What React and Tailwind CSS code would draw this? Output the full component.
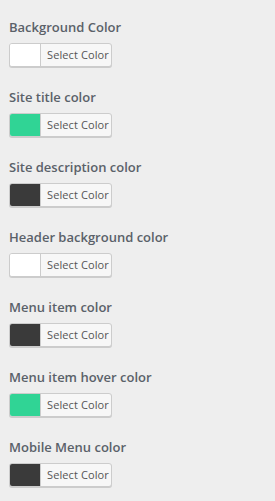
const rows = [
  { label: "Background Color", color: "#ffffff" },
  { label: "Site title color", color: "#30d495" },
  { label: "Site description color", color: "#3a3a3a" },
  { label: "Header background color", color: "#ffffff" },
  { label: "Menu item color", color: "#3a3a3a" },
  { label: "Menu item hover color", color: "#30d495" },
  { label: "Mobile Menu color", color: "#3a3a3a" },
];

export default function App() {
  return (
    <div
      className="min-h-[501px] bg-[#eeeeee] pl-[9px] pt-[18px]"
      style={{ fontFamily: '"Open Sans", "Noto Sans", sans-serif' }}
    >
      {rows.map((r) => (
        <div key={r.label} className="h-[70px]">
          <div className="text-[13px] font-semibold leading-[18px] text-[#5a6169]">
            {r.label}
          </div>
          <div className="mt-[7px] flex h-[24px] w-[103px] overflow-hidden rounded-[3px] border border-[#cccccc] shadow-[0_1px_0_#cccccc] bg-[#f7f7f7]">
            <span
              className="w-[31px] border-r border-[#cccccc]"
              style={{ backgroundColor: r.color }}
            />
            <span className="flex flex-1 items-center pl-[6px] text-[11px] tracking-[0.1px] text-[#555555]">
              Select Color
            </span>
          </div>
        </div>
      ))}
    </div>
  );
}
